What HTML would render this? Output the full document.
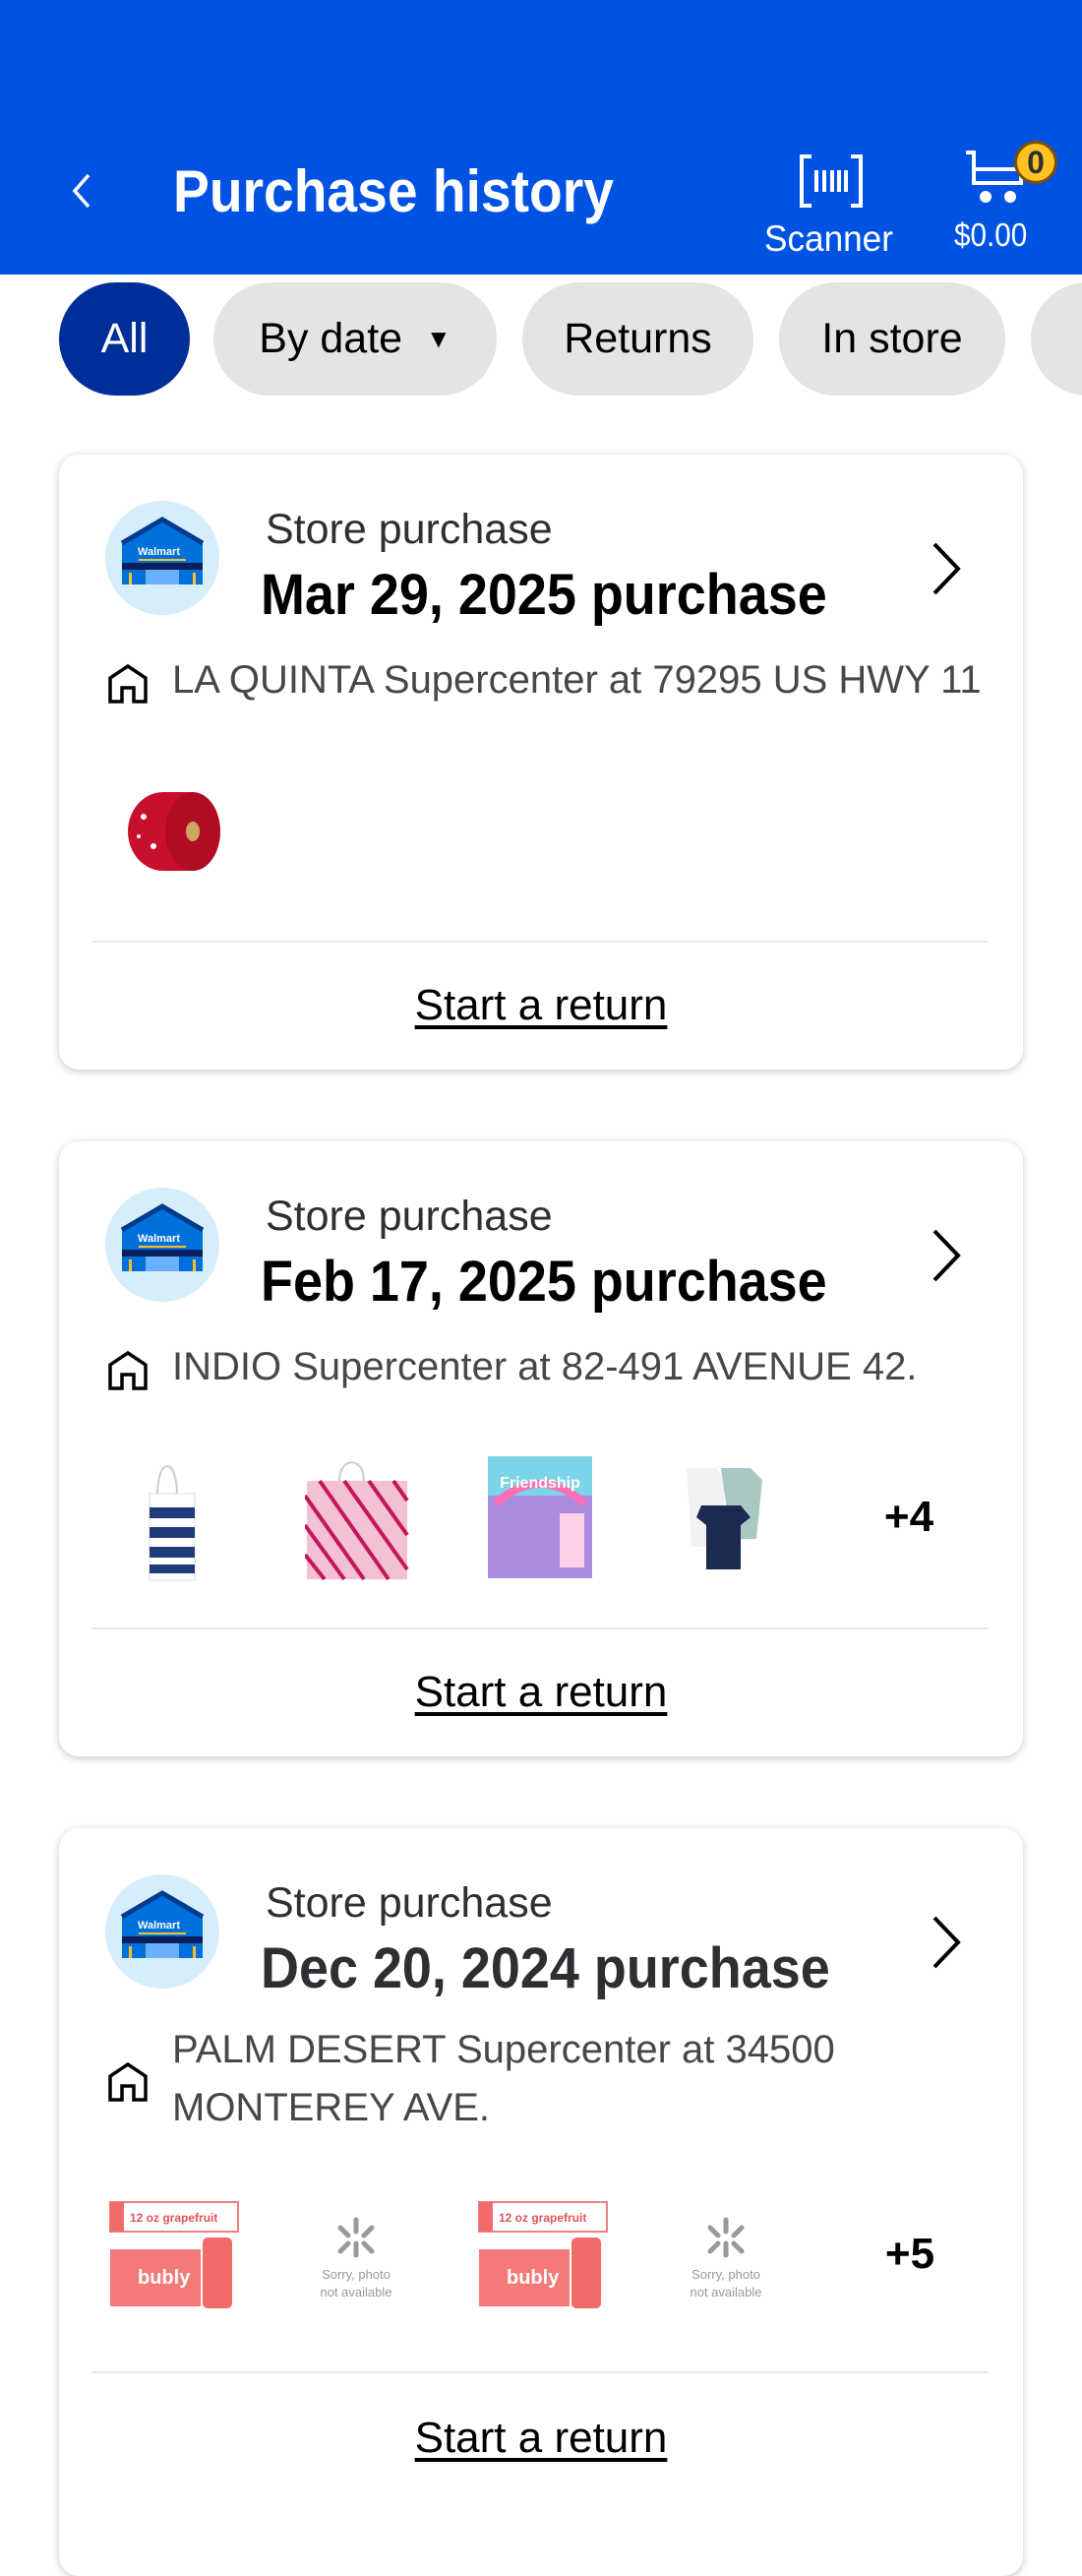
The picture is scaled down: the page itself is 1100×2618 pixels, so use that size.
<!DOCTYPE html>
<html><head><meta charset="utf-8"><style>
*{margin:0;padding:0;box-sizing:border-box}
body{width:1100px;height:2542px;overflow:hidden;background:#fff;font-family:"Liberation Sans",sans-serif;position:relative}
.a{position:absolute;white-space:nowrap}
.hdr{position:absolute;left:0;top:0;width:1100px;height:279px;background:#0053e2}
.chip{position:absolute;top:287px;height:115px;border-radius:58px;background:#e3e4e5;color:#000;font-size:43px;display:flex;align-items:center;justify-content:center}
.card{position:absolute;left:60px;width:980px;background:#fff;border-radius:20px;box-shadow:0 2px 8px rgba(0,0,0,.22)}
.sp{left:210px;top:52px;font-size:43px;color:#2e2f32}
.dt{left:205px;top:109px;font-size:58px;font-weight:bold;transform:scaleX(.93);transform-origin:left}
.ad{left:115px;font-size:40px;color:#46474a}
.dv{position:absolute;left:34px;width:910px;height:2px;background:#e6e7e8}
.rt{left:0;width:980px;text-align:center;font-size:44px;color:#000;text-decoration:underline;text-underline-offset:6px}
.pl{font-size:44px;font-weight:bold;transform:translateX(-50%)}
</style></head><body>
<div class="hdr"></div>
<svg class="a" style="left:68px;top:174px" width="28" height="40" viewBox="0 0 28 40"><path d="M22 4 L8 20 L22 36" stroke="#fff" stroke-width="3.5" fill="none"/></svg>
<div class="a" style="left:176px;top:160px;font-size:60px;font-weight:bold;color:#fff;transform:scaleX(.92);transform-origin:left">Purchase history</div>
<svg class="a" style="left:813px;top:157px" width="64" height="54" viewBox="0 0 64 54"><path d="M12 2H2V52H12M52 2H62V52H52" stroke="#fff" stroke-width="4" fill="none"/><path d="M17 16v22M25 16v22M33 16v22M40 16v22M47 16v22" stroke="#fff" stroke-width="4"/></svg>
<div class="a" style="left:777px;top:222px;font-size:37px;color:#fff;transform:scaleX(.95);transform-origin:left">Scanner</div>
<svg class="a" style="left:980px;top:152px" width="66" height="60" viewBox="0 0 66 60"><path d="M2 3H10V34H58V20H12" stroke="#fff" stroke-width="4" fill="none"/><circle cx="22" cy="48" r="6" fill="#fff"/><circle cx="47" cy="48" r="6" fill="#fff"/></svg>
<div class="a" style="left:1031px;top:143px;width:44px;height:44px;border-radius:50%;background:#ffc220;border:3px solid #7a4d08;font-size:32px;font-weight:bold;color:#2e2f32;text-align:center;line-height:38px">0</div>
<div class="a" style="left:970px;top:220px;font-size:33px;color:#fff;transform:scaleX(.9);transform-origin:left">$0.00</div>

<div class="chip" style="left:60px;width:133px;background:#002e99;color:#fff">All</div>
<div class="chip" style="left:217px;width:288px">By date&nbsp;&nbsp;<span style="font-size:26px">▼</span></div>
<div class="chip" style="left:531px;width:235px">Returns</div>
<div class="chip" style="left:792px;width:230px">In store</div>
<div class="chip" style="left:1048px;width:200px"></div>

<div class="card" style="top:462px;height:625px">
 <svg class="a" style="left:46px;top:46px" width="118" height="118" viewBox="0 0 118 118"><circle cx="59" cy="59" r="58" fill="#d6eefa"/><path d="M18 44 L59 20 L100 44 V86 H18Z" fill="#0071dc"/><path d="M18 44 L59 20 L100 44" stroke="#003b8e" stroke-width="5" fill="none"/><rect x="18" y="64" width="82" height="7" fill="#0a1f5c"/><rect x="35" y="60" width="48" height="2" fill="#ffc220"/><rect x="42" y="71" width="34" height="15" fill="#6ab0ff"/><text x="34" y="56" font-size="11" font-weight="bold" fill="#fff" font-family="Liberation Sans">Walmart</text><rect x="25" y="74" width="3" height="12" fill="#ffc220"/><rect x="90" y="74" width="3" height="12" fill="#ffc220"/></svg>
 <div class="a sp">Store purchase</div>
 <div class="a dt" style="color:#000">Mar 29, 2025 purchase</div>
 <svg class="a" style="left:884px;top:88px" width="36" height="56" viewBox="0 0 36 56"><path d="M6 3 L30 28 L6 53" stroke="#000" stroke-width="4" fill="none"/></svg>
 <svg class="a" style="left:48px;top:211px" width="44" height="44" viewBox="0 0 44 44"><path d="M4 40V16L22 4 40 16V40H28V26H16V40Z" stroke="#000" stroke-width="3.5" fill="none"/></svg>
 <div class="a ad" style="top:207px">LA QUINTA Supercenter at 79295 US HWY 11</div>
 <svg class="a" style="left:66px;top:338px" width="102" height="90" viewBox="0 0 102 90"><ellipse cx="40" cy="45" rx="36" ry="40" fill="#c8102e"/><rect x="40" y="5" width="30" height="80" fill="#c8102e"/><ellipse cx="70" cy="45" rx="28" ry="40" fill="#b00c24"/><ellipse cx="70" cy="45" rx="7" ry="10" fill="#c9a860"/><circle cx="20" cy="30" r="3" fill="#fff"/><circle cx="30" cy="60" r="3" fill="#fff"/><circle cx="15" cy="50" r="2" fill="#fff"/></svg>
 <div class="dv" style="top:494px"></div>
 <div class="a rt" style="top:535px">Start a return</div>
</div>

<div class="card" style="top:1160px;height:625px">
 <svg class="a" style="left:46px;top:46px" width="118" height="118" viewBox="0 0 118 118"><circle cx="59" cy="59" r="58" fill="#d6eefa"/><path d="M18 44 L59 20 L100 44 V86 H18Z" fill="#0071dc"/><path d="M18 44 L59 20 L100 44" stroke="#003b8e" stroke-width="5" fill="none"/><rect x="18" y="64" width="82" height="7" fill="#0a1f5c"/><rect x="35" y="60" width="48" height="2" fill="#ffc220"/><rect x="42" y="71" width="34" height="15" fill="#6ab0ff"/><text x="34" y="56" font-size="11" font-weight="bold" fill="#fff" font-family="Liberation Sans">Walmart</text><rect x="25" y="74" width="3" height="12" fill="#ffc220"/><rect x="90" y="74" width="3" height="12" fill="#ffc220"/></svg>
 <div class="a sp">Store purchase</div>
 <div class="a dt" style="color:#000">Feb 17, 2025 purchase</div>
 <svg class="a" style="left:884px;top:88px" width="36" height="56" viewBox="0 0 36 56"><path d="M6 3 L30 28 L6 53" stroke="#000" stroke-width="4" fill="none"/></svg>
 <svg class="a" style="left:48px;top:211px" width="44" height="44" viewBox="0 0 44 44"><path d="M4 40V16L22 4 40 16V40H28V26H16V40Z" stroke="#000" stroke-width="3.5" fill="none"/></svg>
 <div class="a ad" style="top:207px">INDIO Supercenter at 82-491 AVENUE 42.</div>
 <svg class="a" style="left:80px;top:320px" width="70" height="128" viewBox="0 0 70 128"><path d="M20 40 C20 0 40 0 40 40" stroke="#ccc" stroke-width="2" fill="none"/><rect x="12" y="38" width="46" height="88" fill="#fff" stroke="#ddd"/><g fill="#1f3c7a"><rect x="12" y="52" width="46" height="11"/><rect x="12" y="72" width="46" height="11"/><rect x="12" y="92" width="46" height="11"/><rect x="12" y="110" width="46" height="9"/></g></svg>
 <svg class="a" style="left:250px;top:320px" width="106" height="128" viewBox="0 0 106 128"><path d="M35 25 C35 0 60 0 60 25" stroke="#ccc" stroke-width="2" fill="none"/><rect x="2" y="25" width="102" height="100" fill="#f4c0d4"/><g stroke="#c2185b" stroke-width="4"><path d="M0 40L60 125M0 70L40 125M0 100L20 125M15 25L85 125M40 25L104 115M65 25L104 80M90 25L104 45"/></g></svg>
 <svg class="a" style="left:434px;top:318px" width="110" height="128" viewBox="0 0 110 128"><rect x="2" y="2" width="106" height="124" fill="#a98be0"/><rect x="2" y="2" width="106" height="40" fill="#7dd3e8"/><path d="M10 50 Q55 10 100 50" stroke="#ff6fb1" stroke-width="8" fill="none"/><text x="55" y="34" font-size="16" font-weight="bold" fill="#fff" text-anchor="middle" font-family="Liberation Sans">Friendship</text><rect x="75" y="60" width="25" height="55" fill="#ffd0e8"/></svg>
 <svg class="a" style="left:628px;top:322px" width="96" height="120" viewBox="0 0 96 120"><path d="M10 10h30l8 10v70H15Z" fill="#f2f2f2"/><path d="M45 10h30l12 12-6 60H55Z" fill="#a9c8c4"/><path d="M25 48h40l10 12-10 8v45H30V68l-10-8Z" fill="#1c2a52"/></svg>
 <div class="a pl" style="left:864px;top:357px">+4</div>
 <div class="dv" style="top:494px"></div>
 <div class="a rt" style="top:535px">Start a return</div>
</div>

<div class="card" style="top:1858px;height:760px">
 <svg class="a" style="left:46px;top:46px" width="118" height="118" viewBox="0 0 118 118"><circle cx="59" cy="59" r="58" fill="#d6eefa"/><path d="M18 44 L59 20 L100 44 V86 H18Z" fill="#0071dc"/><path d="M18 44 L59 20 L100 44" stroke="#003b8e" stroke-width="5" fill="none"/><rect x="18" y="64" width="82" height="7" fill="#0a1f5c"/><rect x="35" y="60" width="48" height="2" fill="#ffc220"/><rect x="42" y="71" width="34" height="15" fill="#6ab0ff"/><text x="34" y="56" font-size="11" font-weight="bold" fill="#fff" font-family="Liberation Sans">Walmart</text><rect x="25" y="74" width="3" height="12" fill="#ffc220"/><rect x="90" y="74" width="3" height="12" fill="#ffc220"/></svg>
 <div class="a sp">Store purchase</div>
 <div class="a dt" style="color:#2e2f32">Dec 20, 2024 purchase</div>
 <svg class="a" style="left:884px;top:88px" width="36" height="56" viewBox="0 0 36 56"><path d="M6 3 L30 28 L6 53" stroke="#000" stroke-width="4" fill="none"/></svg>
 <svg class="a" style="left:48px;top:236px" width="44" height="44" viewBox="0 0 44 44"><path d="M4 40V16L22 4 40 16V40H28V26H16V40Z" stroke="#000" stroke-width="3.5" fill="none"/></svg>
 <div class="a ad" style="top:203px">PALM DESERT Supercenter at 34500</div>
 <div class="a ad" style="top:262px">MONTEREY AVE.</div>
 <svg class="a" style="left:50px;top:378px" width="134" height="112" viewBox="0 0 134 112"><rect x="2" y="2" width="130" height="30" fill="#fff" stroke="#f08080" stroke-width="2"/><rect x="2" y="2" width="14" height="30" fill="#f26b6b"/><text x="22" y="22" font-size="12" font-weight="bold" fill="#e05555" font-family="Liberation Sans">12 oz  grapefruit</text><rect x="2" y="50" width="92" height="58" fill="#f47a7a"/><rect x="96" y="38" width="30" height="72" rx="5" fill="#f26b6b"/><text x="30" y="85" font-size="20" font-weight="bold" fill="#fff" font-family="Liberation Sans">bubly</text></svg>
 <svg class="a" style="left:254px;top:392px" width="96" height="92" viewBox="0 0 96 92"><g stroke="#999" stroke-width="5" stroke-linecap="round"><path d="M48 6v12M48 30v12M32 14l8 8M64 14l-8 8M32 38l8-8M64 38l-8-8"/></g><text x="48" y="66" font-size="13" fill="#999" text-anchor="middle" font-family="Liberation Sans">Sorry, photo</text><text x="48" y="84" font-size="13" fill="#999" text-anchor="middle" font-family="Liberation Sans">not available</text></svg>
 <svg class="a" style="left:425px;top:378px" width="134" height="112" viewBox="0 0 134 112"><rect x="2" y="2" width="130" height="30" fill="#fff" stroke="#f08080" stroke-width="2"/><rect x="2" y="2" width="14" height="30" fill="#f26b6b"/><text x="22" y="22" font-size="12" font-weight="bold" fill="#e05555" font-family="Liberation Sans">12 oz  grapefruit</text><rect x="2" y="50" width="92" height="58" fill="#f47a7a"/><rect x="96" y="38" width="30" height="72" rx="5" fill="#f26b6b"/><text x="30" y="85" font-size="20" font-weight="bold" fill="#fff" font-family="Liberation Sans">bubly</text></svg>
 <svg class="a" style="left:630px;top:392px" width="96" height="92" viewBox="0 0 96 92"><g stroke="#999" stroke-width="5" stroke-linecap="round"><path d="M48 6v12M48 30v12M32 14l8 8M64 14l-8 8M32 38l8-8M64 38l-8-8"/></g><text x="48" y="66" font-size="13" fill="#999" text-anchor="middle" font-family="Liberation Sans">Sorry, photo</text><text x="48" y="84" font-size="13" fill="#999" text-anchor="middle" font-family="Liberation Sans">not available</text></svg>
 <div class="a pl" style="left:865px;top:408px">+5</div>
 <div class="dv" style="top:552px"></div>
 <div class="a rt" style="top:595px">Start a return</div>
</div>
</body></html>
